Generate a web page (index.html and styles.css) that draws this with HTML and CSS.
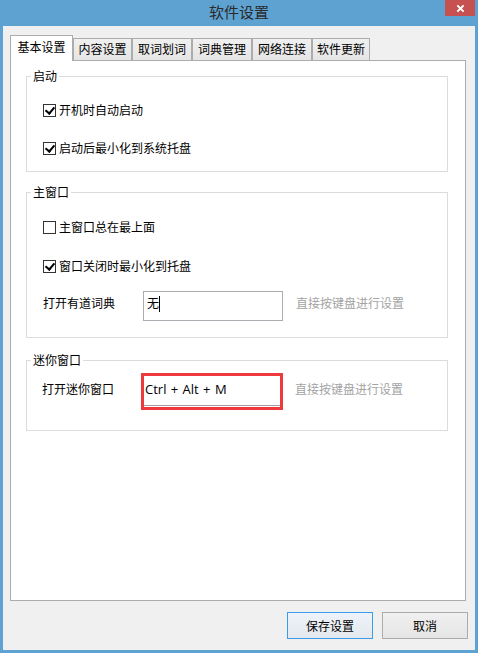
FILE: index.html
```html
<!DOCTYPE html>
<html lang="zh-CN">
<head>
<meta charset="utf-8">
<title>软件设置</title>
<link rel="stylesheet" href="styles.css">
</head>
<body>
<div class="window">
  <div class="titlebar">
    <span></span>
    <span class="title">软件设置</span>
    <span class="close-wrap"><span class="close">
      <svg width="10" height="10" viewBox="0 0 10 10"><path d="M1.5 1.5 L8.5 8.5 M8.5 1.5 L1.5 8.5" stroke="#fff" stroke-width="2.2" fill="none"/></svg>
    </span></span>
  </div>
  <div class="content">
    <div class="tabs">
      <div class="tab active">基本设置</div>
      <div class="tab">内容设置</div>
      <div class="tab wide">取词划词</div>
      <div class="tab wide">词典管理</div>
      <div class="tab wide">网络连接</div>
      <div class="tab narrow">软件更新</div>
    </div>
    <div class="panel">
      <div class="group g1">
        <div class="group-title">启动</div>
        <div class="group-body">
          <div class="row first"><span class="cb checked"></span><span>开机时自动启动</span></div>
          <div class="row second"><span class="cb checked"></span><span>启动后最小化到系统托盘</span></div>
        </div>
      </div>
      <div class="group g2">
        <div class="group-title">主窗口</div>
        <div class="group-body">
          <div class="row first"><span class="cb"></span><span>主窗口总在最上面</span></div>
          <div class="row second"><span class="cb checked"></span><span>窗口关闭时最小化到托盘</span></div>
          <div class="field-row">
            <span class="label">打开有道词典</span>
            <div class="input"><span>无</span><span class="caret"></span></div>
            <span class="hint">直接按键盘进行设置</span>
          </div>
        </div>
      </div>
      <div class="group g3">
        <div class="group-title">迷你窗口</div>
        <div class="group-body">
          <div class="field-row mini">
            <span class="label">打开迷你窗口</span>
            <div class="highlight"><div class="input inner"><span class="latin">Ctrl + Alt + M</span></div></div>
            <span class="hint">直接按键盘进行设置</span>
          </div>
        </div>
      </div>
    </div>
    <div class="buttons">
      <div class="btn primary">保存设置</div>
      <div class="btn">取消</div>
    </div>
  </div>
</div>
</body>
</html>
```
FILE: styles.css
```css
* { box-sizing: border-box; }
html, body { margin: 0; padding: 0; }
body {
  font-family: "Noto Sans CJK SC", "Noto Sans", sans-serif;
  font-size: 12px;
  line-height: 20px;
  color: #000;
  background: #5da2d0;
}
.window {
  width: 478px;
  height: 653px;
  background: #5da2d0;
  padding: 0 3px 3px 3px;
  display: flex;
  flex-direction: column;
}
.titlebar {
  height: 26px;
  display: grid;
  grid-template-columns: 1fr auto 1fr;
  align-items: start;
}
.title {
  font-size: 15px;
  line-height: 20px;
  color: #2b2b2b;
  padding-top: 2px;
}
.close-wrap { display: flex; justify-content: flex-end; }
.close {
  width: 30px;
  height: 16px;
  background: #c75050;
  display: flex;
  align-items: center;
  justify-content: center;
}
.close svg { display: block; width: 9px; height: 9px; }
.content {
  flex: 1;
  background: #f0f0f0;
  padding: 9px 9px 0 7px;
  display: flex;
  flex-direction: column;
}
.tabs {
  display: flex;
  align-items: flex-end;
  margin-bottom: -1px;
  position: relative;
  z-index: 1;
}
.tab {
  width: 59px;
  height: 23px;
  border: 1px solid #acacac;
  background: linear-gradient(#f0f0f0, #e5e5e5);
  line-height: 20px;
  text-align: center;
  color: #000;
  white-space: nowrap;
}
.tab.wide { width: 60px; }
.tab.narrow { width: 58px; }
.tab.active {
  width: 63px;
  height: 26px;
  background: #fff;
  border-bottom: none;
  padding-top: 1px;
}
.panel {
  flex: 1;
  background: #fff;
  border: 1px solid #acacac;
  padding: 15px 17px 0 15px;
}
.group {
  border: 1px solid #dcdcdc;
}
.group-title {
  display: block;
  width: max-content;
  margin: -9px 0 0 4px;
  padding: 0 2px;
  background: #fff;
  line-height: 16px;
  height: 16px;
}
.group-body {
  padding-left: 16px;
}
.row {
  height: 20px;
  display: flex;
  align-items: center;
  gap: 3px;
  line-height: 20px;
}
.cb {
  width: 13px;
  height: 13px;
  border: 1px solid #333;
  background: #fff;
  flex: none;
  position: relative;
}
.cb.checked::after {
  content: "";
  position: absolute;
  left: 3px;
  top: 0px;
  width: 4px;
  height: 7px;
  border-right: 2px solid #000;
  border-bottom: 2px solid #000;
  transform: rotate(40deg);
}
.g1 .group-body { padding-bottom: 13px; }
.g1 .row.first { margin-top: 16px; }
.g1 .row.second { margin-top: 18px; }
.g2 { margin-top: 20px; }
.g2 .group-body { padding-bottom: 16px; }
.g2 .row.first { margin-top: 17px; }
.g2 .row.second { margin-top: 19px; }
.field-row {
  display: flex;
  align-items: flex-start;
  margin-top: 15px;
}
.label {
  width: 100px;
  line-height: 20px;
  padding-top: 2px;
  flex: none;
}
.input {
  width: 140px;
  height: 30px;
  border: 1px solid #abadb3;
  background: #fff;
  padding: 1px 3px;
  line-height: 20px;
  display: flex;
  align-items: flex-start;
  flex: none;
}
.caret {
  display: inline-block;
  width: 1px;
  height: 16px;
  background: #000;
  margin-top: 3px;
}
.hint {
  color: #a3a3a3;
  line-height: 20px;
  padding-top: 2px;
  margin-left: 13px;
}
.g3 { margin-top: 22px; }
.g3 .group-body { padding-bottom: 20px; }
.field-row.mini { margin-top: 5px; }
.field-row.mini .label { padding-top: 6px; margin-left: -1px; width: 99px; }
.highlight {
  width: 142px;
  height: 37px;
  border: 3px solid #ef3a3d;
  background: #fff;
  flex: none;
}
.input.inner {
  width: 136px;
  height: 30px;
  border: none;
  border-bottom: 1px solid #a0a0a0;
  padding: 3px 1px 0 1px;
}
.latin {
  font-family: "Open Sans", "Noto Sans", sans-serif;
  font-size: 13px;
  word-spacing: 1px;
  line-height: 20px;
}
.field-row.mini .hint { margin-left: 12px; padding-top: 6px; }
.buttons {
  display: flex;
  justify-content: flex-end;
  gap: 9px;
  margin: 11px -2px 11px 0;
}
.btn {
  width: 86px;
  height: 27px;
  border: 1px solid #acacac;
  background: linear-gradient(#f0f0f0, #e5e5e5);
  display: flex;
  align-items: center;
  justify-content: center;
  line-height: 20px;
}
.btn.primary {
  border-color: #3c9be8;
  background: linear-gradient(#eef3f9, #e4e9ef);
}
```
